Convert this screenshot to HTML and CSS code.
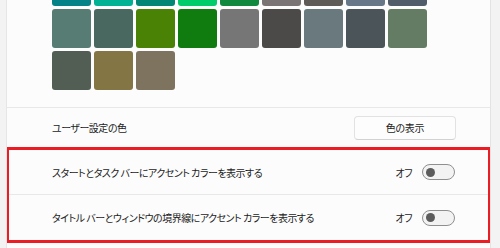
FILE: index.html
```html
<!DOCTYPE html>
<html lang="ja">
<head>
    <meta charset="UTF-8">
    <meta name="viewport" content="width=device-width, initial-scale=1.0">
    <title>色</title>
    <link rel="stylesheet" href="styles.css">
</head>
<body>
    <div class="page">
        <div class="card">
            <div class="swatches">
                <span class="swatch" style="background:#038387"></span>
                <span class="swatch" style="background:#00b294"></span>
                <span class="swatch" style="background:#018574"></span>
                <span class="swatch" style="background:#00cc6a"></span>
                <span class="swatch" style="background:#10893e"></span>
                <span class="swatch" style="background:#7a7574"></span>
                <span class="swatch" style="background:#5d5a58"></span>
                <span class="swatch" style="background:#68768a"></span>
                <span class="swatch" style="background:#515c6b"></span>

                <span class="swatch" style="background:#567c73"></span>
                <span class="swatch" style="background:#486860"></span>
                <span class="swatch" style="background:#498205"></span>
                <span class="swatch" style="background:#107c10"></span>
                <span class="swatch" style="background:#767676"></span>
                <span class="swatch" style="background:#4c4a48"></span>
                <span class="swatch" style="background:#69797e"></span>
                <span class="swatch" style="background:#4a5459"></span>
                <span class="swatch" style="background:#647c64"></span>

                <span class="swatch" style="background:#525e54"></span>
                <span class="swatch" style="background:#847545"></span>
                <span class="swatch" style="background:#7e735f"></span>
            </div>

            <div class="row custom-row">
                <span class="label">ユーザー設定の色</span>
                <button type="button" class="view-btn">色の表示</button>
            </div>

            <div class="highlight">
                <div class="row toggle-row">
                    <span class="label">スタートとタスク バーにアクセント カラーを表示する</span>
                    <div class="toggle-wrap">
                        <span class="state">オフ</span>
                        <span class="toggle"><span class="knob"></span></span>
                    </div>
                </div>
                <div class="row toggle-row last">
                    <span class="label">タイトル バーとウィンドウの境界線にアクセント カラーを表示する</span>
                    <div class="toggle-wrap">
                        <span class="state">オフ</span>
                        <span class="toggle"><span class="knob"></span></span>
                    </div>
                </div>
            </div>
        </div>
    </div>
</body>
</html>
```

FILE: styles.css
```css
body {
    margin: 0;
    background-color: #f3f3f3;
    font-family: "Noto Sans CJK JP", "Noto Sans", sans-serif;
    font-size: 10px;
    letter-spacing: -0.5px;
    font-feature-settings: "palt";
    color: #1b1b1b;
    overflow: hidden;
}

.page {
    padding: 0 9px 0 6px;
}

.card {
    display: flow-root;
    height: 248px;
    overflow: hidden;
    background-color: #fcfcfc;
    border-left: 1px solid #e6e6e6;
    border-right: 1px solid #e3e3e3;
}

.swatches {
    display: grid;
    grid-template-columns: repeat(9, 39px);
    grid-auto-rows: 39px;
    gap: 3px;
    margin-top: -33px;
    padding: 0 0 17px 45px;
    border-bottom: 1px solid #e8e8e8;
}

.swatch {
    border-radius: 3px;
}

.row {
    display: flex;
    align-items: center;
    justify-content: space-between;
}

.custom-row {
    height: 39px;
    padding: 0 34px 0 45px;
}

.view-btn {
    width: 102px;
    height: 24px;
    padding: 0;
    font-family: inherit;
    font-size: 10px;
    letter-spacing: -0.3px;
    font-feature-settings: "palt";
    color: #1b1b1b;
    background-color: #fdfdfd;
    border: 1px solid #e2e2e2;
    border-bottom-color: #d2d2d2;
    border-radius: 4px;
}

.highlight {
    margin: 0 -1px;
    border: 3px solid #ec1c24;
}

.toggle-row {
    height: 44px;
    padding: 0 33px 0 43px;
    border-bottom: 1px solid #e8e8e8;
}

.toggle-row.last {
    height: 45px;
    border-bottom: none;
}

.toggle-wrap {
    display: flex;
    align-items: center;
    gap: 10px;
}

.toggle {
    box-sizing: border-box;
    display: flex;
    align-items: center;
    width: 33px;
    height: 16px;
    padding: 0 3px;
    border: 1px solid #8f8f8f;
    border-radius: 8px;
    background-color: #f3f3f3;
}

.knob {
    width: 9px;
    height: 9px;
    border-radius: 50%;
    background-color: #5c5c5c;
}
```
